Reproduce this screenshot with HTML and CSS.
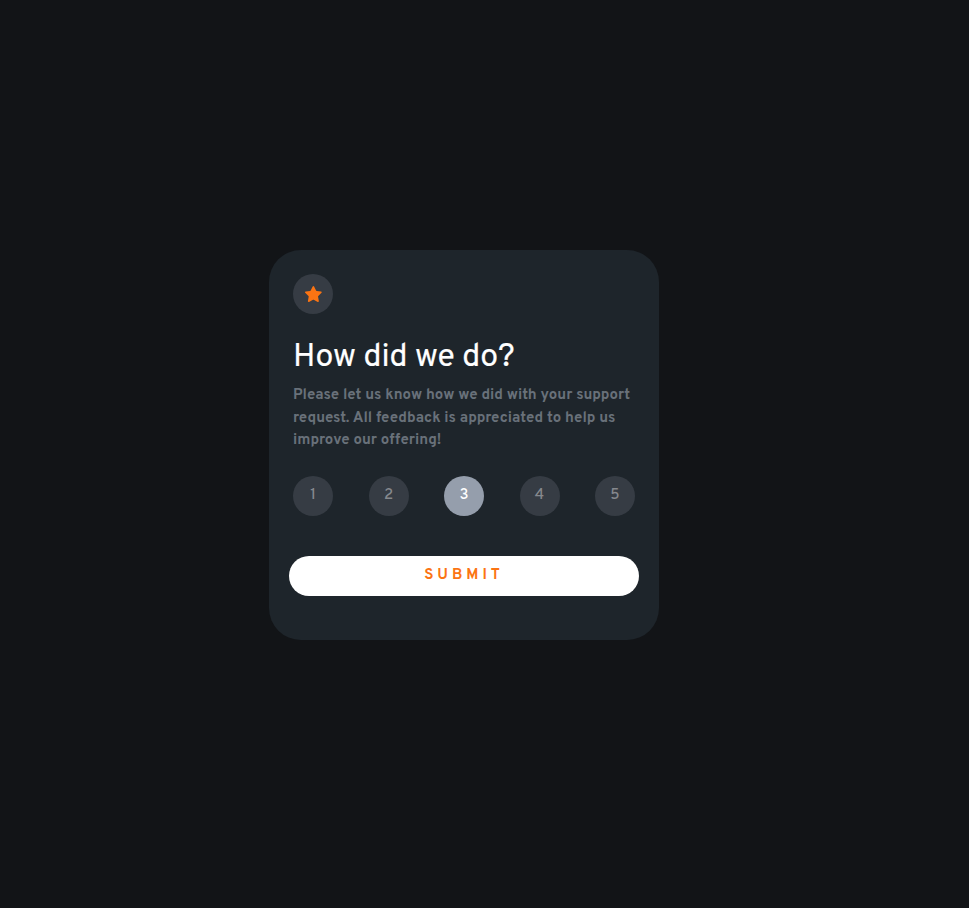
FILE: index.html
```html
<!DOCTYPE html>
<html lang="en">
<head>
<meta charset="utf-8">
<title>Interactive rating</title>
<link rel="stylesheet" href="styles.css">
</head>
<body>
<main class="card">
  <div class="icon">
    <svg width="17" height="16" viewBox="0 0 17 16"><path fill="#fb7413" d="m9.067.43 1.99 4.031c.112.228.33.386.58.422l4.45.647a.772.772 0 0 1 .427 1.316l-3.22 3.138a.773.773 0 0 0-.222.683l.76 4.431a.772.772 0 0 1-1.12.813l-3.98-2.092a.773.773 0 0 0-.718 0l-3.98 2.092a.772.772 0 0 1-1.119-.813l.76-4.431a.77.77 0 0 0-.222-.683L.233 6.846A.772.772 0 0 1 .661 5.53l4.449-.647a.772.772 0 0 0 .58-.422L7.68.43a.774.774 0 0 1 1.387 0Z"/></svg>
  </div>
  <h1 class="title">How did we do?</h1>
  <p class="text">Please let us know how we did with your support request. All feedback is appreciated to help us improve our offering!</p>
  <div class="ratings">
    <button class="rating">1</button>
    <button class="rating">2</button>
    <button class="rating selected">3</button>
    <button class="rating">4</button>
    <button class="rating">5</button>
  </div>
  <button class="submit">SUBMIT</button>
</main>
</body>
</html>
```
FILE: styles.css
```css
* { box-sizing: border-box; }
body { margin: 0; background: #121417; font-family: Overpass, "Open Sans", sans-serif; }
.card { width: 390px; height: 390px; margin: 250px 0 0 269px; padding: 24px; border-radius: 32px; background: #1e252b; }
.icon { display: flex; align-items: center; justify-content: center; width: 40px; height: 40px; border-radius: 50%; background: #363c44; }
.title { margin: 23px 0 0; height: 42px; font-size: 32px; line-height: 42px; font-weight: 400; color: #fff; white-space: nowrap; -webkit-text-stroke: 0.2px #fff; }
.text { margin: 6px 0 0; font-size: 15px; line-height: 22.5px; font-weight: 700; color: #69717a; }
.ratings { display: flex; justify-content: space-between; margin-top: 23.5px; }
.rating { width: 40px; height: 40px; padding: 0 0 2px; border: 0; border-radius: 50%; background: #363c44; color: #85888d; font: 500 15px Overpass, "Open Sans", sans-serif; }
.selected { background: #959eac; color: #fff; }
.submit { display: block; width: 350px; height: 40px; margin: 40px 0 0 -4px; padding: 0 0 2px; border: 0; border-radius: 20px; background: #fff; color: #fb7413; font: 700 15px Overpass, "Open Sans", sans-serif; letter-spacing: 4px; }
```
